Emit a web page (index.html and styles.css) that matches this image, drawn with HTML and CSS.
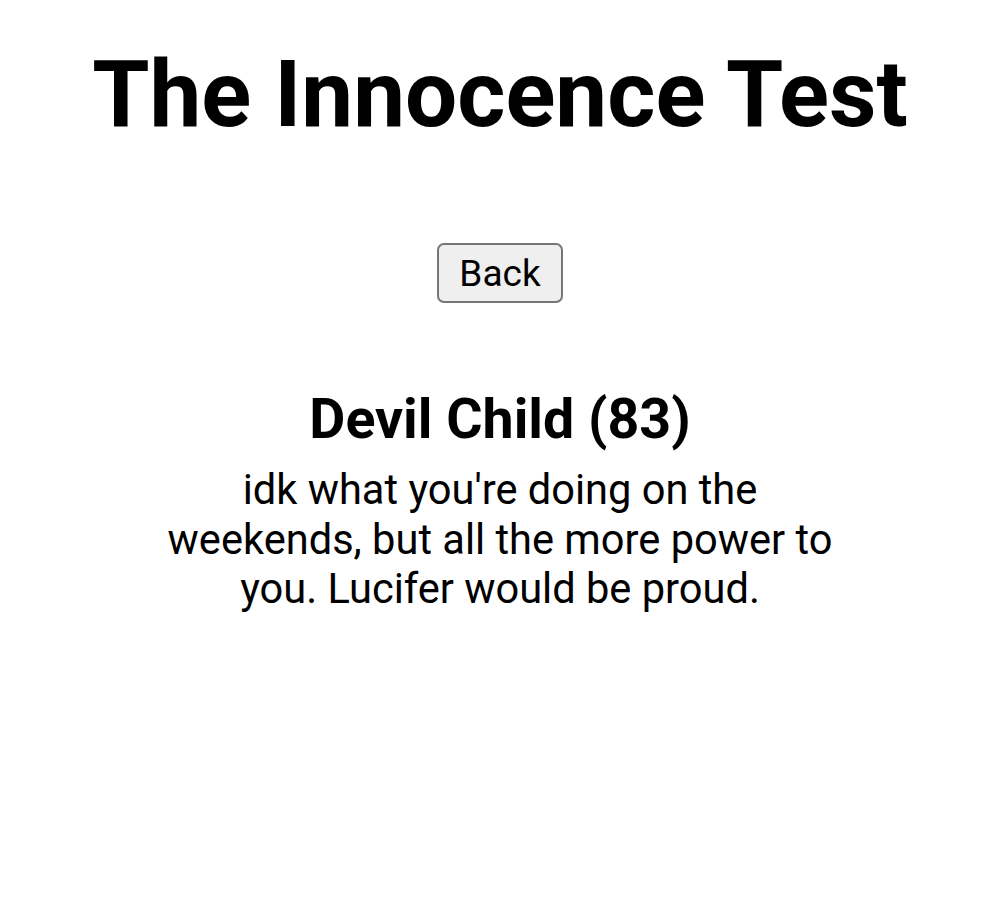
FILE: index.html
```html
<!DOCTYPE html>
<html>
<head>
<meta charset="utf-8">
<link rel="stylesheet" href="styles.css">
</head>
<body>
<main class="page">
  <h1 class="title">The Innocence Test</h1>
  <button class="back">Back</button>
  <section class="result">
    <h2 class="result-title">Devil Child (83)</h2>
    <p class="result-text">idk what you're doing on the weekends, but all the more power to you. Lucifer would be proud.</p>
  </section>
</main>
</body>
</html>
```
FILE: styles.css
```css
html, body {
  margin: 0;
  padding: 0;
  background: #fff;
}
body {
  font-family: Roboto, "Liberation Sans", sans-serif;
  color: #000;
}
.page {
  display: flex;
  flex-direction: column;
  align-items: center;
  text-align: center;
}
.title {
  margin: 40px 0 0;
  font-size: 92.5px;
  font-weight: 700;
  line-height: normal;
}
.back {
  margin-top: 94px;
  font-family: Roboto, "Liberation Sans", sans-serif;
  font-size: 37px;
  line-height: normal;
  padding: 6.5px 20px;
  background: #efefef;
  color: #000;
  border: 2.5px solid #767676;
  border-radius: 7px;
}
.result {
  margin-top: 84px;
  width: 680px;
}
.result-title {
  margin: 0;
  font-size: 55.5px;
  font-weight: 700;
  line-height: normal;
}
.result-text {
  margin: 13px 0 0;
  font-size: 41.6px;
  line-height: 49.5px;
}
```
